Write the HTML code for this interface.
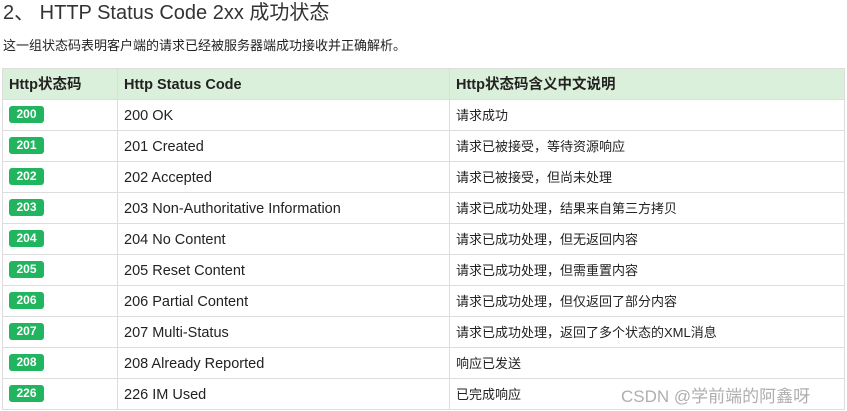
<!DOCTYPE html>
<html><head><meta charset="utf-8"><style>
body{margin:0;background:#fff;font-family:"Liberation Sans","Noto Sans CJK SC",sans-serif;color:#222;width:847px;height:411px;overflow:hidden;position:relative}
h2{position:absolute;left:3px;top:-1px;margin:0;font-weight:normal;font-size:20px;color:#333;line-height:28px}
p{position:absolute;left:3px;top:37px;margin:0;font-size:13px;line-height:18px;color:#222}
table{position:absolute;left:2px;top:68px;border-collapse:collapse;width:843px;table-layout:fixed}
tr{height:31px}
td,th{border:1px solid #ddd;height:31px;padding:0 6px;font-size:14.5px;text-align:left;box-sizing:border-box;vertical-align:middle;white-space:nowrap}
td>div,th>div{display:flex;align-items:center;height:29px;line-height:18px;overflow:hidden;position:relative;top:1px}
th{background:#dbf0da;font-weight:bold}
td:nth-child(3){font-size:13px}
.b{display:block;background:#20b55e;color:#fff;font-weight:bold;font-size:12px;width:35px;height:17px;line-height:17px;text-align:center;border-radius:3px;position:relative;top:-2px}
.wm{position:absolute;left:621px;top:382px;font-size:17px;color:rgba(120,120,120,.6)}
</style></head><body>
<h2>2、 HTTP Status Code 2xx 成功状态</h2>
<p>这一组状态码表明客户端的请求已经被服务器端成功接收并正确解析。</p>
<table>
<col style="width:115px"><col style="width:332px"><col>
<tr><th><div>Http状态码</div></th><th><div>Http Status Code</div></th><th><div>Http状态码含义中文说明</div></th></tr>
<tr><td><div><span class="b">200</span></div></td><td><div>200 OK</div></td><td><div>请求成功</div></td></tr>
<tr><td><div><span class="b">201</span></div></td><td><div>201 Created</div></td><td><div>请求已被接受，等待资源响应</div></td></tr>
<tr><td><div><span class="b">202</span></div></td><td><div>202 Accepted</div></td><td><div>请求已被接受，但尚未处理</div></td></tr>
<tr><td><div><span class="b">203</span></div></td><td><div>203 Non-Authoritative Information</div></td><td><div>请求已成功处理，结果来自第三方拷贝</div></td></tr>
<tr><td><div><span class="b">204</span></div></td><td><div>204 No Content</div></td><td><div>请求已成功处理，但无返回内容</div></td></tr>
<tr><td><div><span class="b">205</span></div></td><td><div>205 Reset Content</div></td><td><div>请求已成功处理，但需重置内容</div></td></tr>
<tr><td><div><span class="b">206</span></div></td><td><div>206 Partial Content</div></td><td><div>请求已成功处理，但仅返回了部分内容</div></td></tr>
<tr><td><div><span class="b">207</span></div></td><td><div>207 Multi-Status</div></td><td><div>请求已成功处理，返回了多个状态的XML消息</div></td></tr>
<tr><td><div><span class="b">208</span></div></td><td><div>208 Already Reported</div></td><td><div>响应已发送</div></td></tr>
<tr><td><div><span class="b">226</span></div></td><td><div>226 IM Used</div></td><td><div>已完成响应</div></td></tr>
</table>
<div class="wm">CSDN @学前端的阿鑫呀</div>
</body></html>
